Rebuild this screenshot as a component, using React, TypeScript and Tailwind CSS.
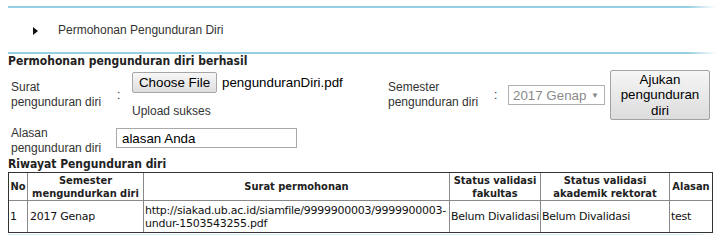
import React from 'react';

const App: React.FC = () => {
  return (
    <div className="h-[248px] w-[725px] overflow-hidden bg-white px-2 font-['Liberation_Sans',Arial,sans-serif] text-[12px] text-[#333]">
      {/* top rule */}
      <div className="mt-[6px] h-[2px] w-[708px] bg-linear-to-r from-[#95cfe2] via-[#95cfe2] via-[96%] to-white" />

      {/* breadcrumb */}
      <div className="flex h-[44px] items-center pl-[25px] leading-[14px]">
        <svg width="5" height="8" viewBox="0 0 5 8" className="mt-px">
          <polygon points="0,0 5,4 0,8" fill="#111" />
        </svg>
        <span className="ml-[20px]">Permohonan Pengunduran Diri</span>
      </div>

      <div className="h-[2px] w-[708px] bg-linear-to-r from-[#95cfe2] via-[#95cfe2] via-[96%] to-white" />

      <h2 className="font-['DejaVu_Sans_Condensed','DejaVu_Sans',sans-serif] text-[12px] leading-[14px] font-bold text-[#222]">
        Permohonan pengunduran diri berhasil
      </h2>

      {/* form row 1 */}
      <div className="mt-[2px] flex h-[50px] items-center pl-[3px] leading-[15px]">
        <div className="w-[106px]">
          Surat
          <br />
          pengunduran diri
        </div>
        <div className="w-[14px]">:</div>
        <div className="flex w-[257px] flex-col self-stretch pt-[2px] pl-px">
          <div className="flex items-center text-[13.33px] text-black">
            <button className="h-[21px] w-[85px] rounded-[2px] border border-[#a6a6a6] bg-linear-to-b from-[#f7f7f7] to-[#dedede] leading-[15px]">
              Choose File
            </button>
            <span className="ml-[5px]">pengunduranDiri.pdf</span>
          </div>
          <div className="mt-[11px] leading-[14px]">Upload sukses</div>
        </div>
        <div className="w-[106px]">
          Semester
          <br />
          pengunduran diri
        </div>
        <div className="w-[14px]">:</div>
        <div className="flex h-[20px] w-[97px] items-center justify-between border border-[#b0b0b0] bg-white pr-[5px] pl-[4px] text-[13.33px] text-[#8a8a8a]">
          <span>2017 Genap</span>
          <span className="text-[8px]">▼</span>
        </div>
        <button className="ml-[5px] h-[50px] w-[100px] rounded-[2px] border border-[#a3a3a3] bg-linear-to-b from-[#f6f6f6] to-[#dcdcdc] text-[13.33px] leading-[15.5px] text-black">
          Ajukan
          <br />
          pengunduran
          <br />
          diri
        </button>
      </div>

      {/* form row 2 */}
      <div className="mt-[6px] flex items-start pl-[3px] leading-[15px]">
        <div className="w-[105px]">
          Alasan
          <br />
          pengunduran diri
        </div>
        <div className="mt-[2px] flex h-[20px] w-[181px] items-center border border-[#a9a9a9] pl-[5px] text-[13.33px] text-black">
          alasan Anda
        </div>
      </div>

      <h2 className="mt-px font-['DejaVu_Sans_Condensed','DejaVu_Sans',sans-serif] text-[12px] leading-[14px] font-bold text-[#222]">
        Riwayat Pengunduran diri
      </h2>

      {/* history table */}
      <table className="mt-px w-[705px] table-fixed border-separate border-spacing-0 border border-[#333] font-['DejaVu_Sans',sans-serif] text-[11px] leading-[13px] text-[#111]">
        <thead>
          <tr className="font-['DejaVu_Sans_Condensed','DejaVu_Sans',sans-serif] font-bold text-[#222]">
            <th className="h-[28px] w-[19px] border-r border-b border-[#888] px-px">No</th>
            <th className="w-[116px] border-r border-b border-[#888] px-px">
              Semester mengundurkan diri
            </th>
            <th className="w-[306px] border-r border-b border-[#888] px-px">Surat permohonan</th>
            <th className="w-[91px] border-r border-b border-[#888] px-px">Status validasi fakultas</th>
            <th className="w-[129px] border-r border-b border-[#888] px-px">
              Status validasi akademik rektorat
            </th>
            <th className="w-[42px] border-b border-[#888] px-px">Alasan</th>
          </tr>
        </thead>
        <tbody className="tracking-[-0.25px]">
          <tr>
            <td className="h-[31px] border-r border-[#888] px-px">1</td>
            <td className="border-r border-[#888] px-[2px]">2017 Genap</td>
            <td className="border-r border-[#888] px-px whitespace-nowrap">
              http://siakad.ub.ac.id/siamfile/9999900003/9999900003-
              <br />
              undur-1503543255.pdf
            </td>
            <td className="border-r border-[#888] px-px whitespace-nowrap">Belum Divalidasi</td>
            <td className="border-r border-[#888] px-px whitespace-nowrap">Belum Divalidasi</td>
            <td className="px-px">test</td>
          </tr>
        </tbody>
      </table>

      <div className="mt-px h-px w-[708px] bg-linear-to-r from-[#d3eaf2] via-[#d3eaf2] via-[96%] to-white" />
    </div>
  );
};

export default App;
